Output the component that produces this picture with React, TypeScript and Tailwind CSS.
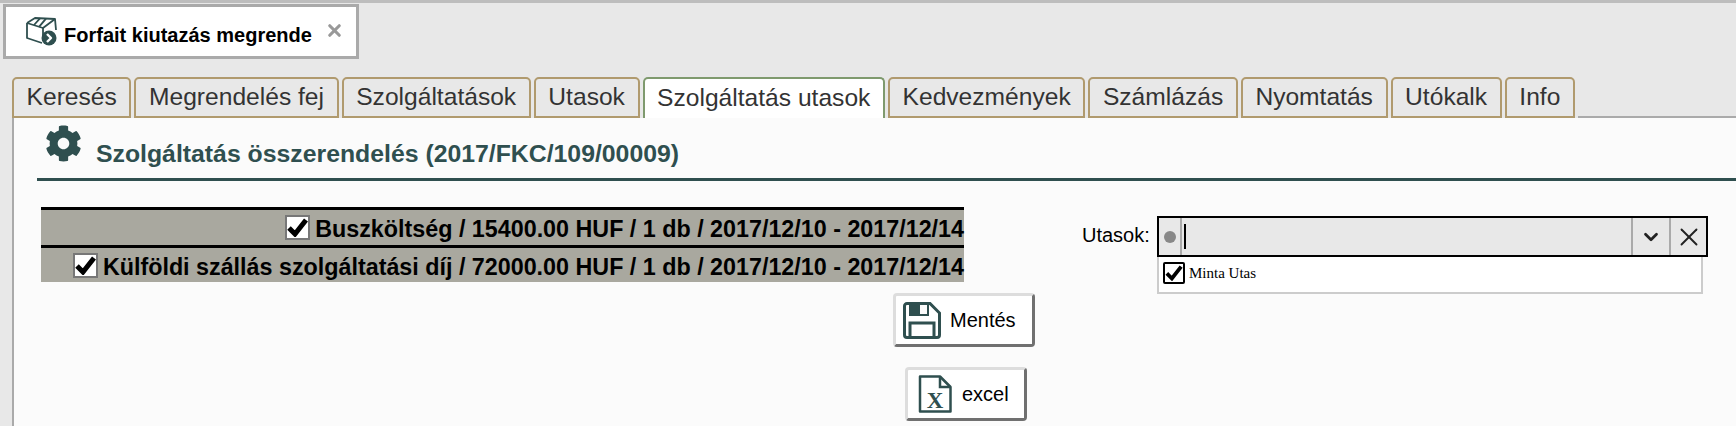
import { X, ChevronDown } from 'lucide-react';
import { FaCog } from 'react-icons/fa';

const tabs = ['Keresés', 'Megrendelés fej', 'Szolgáltatások', 'Utasok', 'Szolgáltatás utasok', 'Kedvezmények', 'Számlázás', 'Nyomtatás', 'Utókalk', 'Info'];

function BoxIcon() {
  return (
    <svg width="32" height="30" viewBox="0 0 32 30" fill="none" stroke="#2f4f4f" strokeWidth="1.8" strokeLinejoin="round">
      <path d="M1 6 L9 1 L29 2 L30 13" />
      <path d="M1 6 L17 11 L29 2" />
      <path d="M1 6 V21 L16 26" />
      <path d="M17 11 V19" />
      <path d="M14 1.3 L8 8 M20 1.6 L13 9.8" />
      <circle cx="23" cy="21" r="7.5" fill="#2f4f4f" stroke="none" />
      <path d="M21 17 L25 21 L21 25" stroke="#fff" strokeWidth="2.4" />
    </svg>
  );
}

function SaveIcon() {
  return (
    <svg width="38" height="37" viewBox="0 0 38 37" fill="none">
      <path d="M4 1.5 H27 L36.5 11 V33 a2.5 2.5 0 0 1 -2.5 2.5 H4 A2.5 2.5 0 0 1 1.5 33 V4 A2.5 2.5 0 0 1 4 1.5 Z" stroke="#2f4f4f" strokeWidth="3" />
      <path d="M6 3 H26 V14 H6 Z" fill="#2f4f4f" />
      <rect x="17" y="3" width="7" height="9" fill="#fbfbfb" />
      <path d="M7 34 V21 H31 V34" stroke="#2f4f4f" strokeWidth="3" />
    </svg>
  );
}

function ExcelIcon() {
  return (
    <svg width="34" height="38" viewBox="0 0 34 38" fill="none">
      <path d="M2 1.5 H22 L32.5 12 V36.5 H2 Z" stroke="#2f4f4f" strokeWidth="2.5" strokeLinejoin="round" />
      <path d="M22 1.5 V12 H32.5" stroke="#2f4f4f" strokeWidth="2.5" />
      <text x="17" y="33" textAnchor="middle" fontFamily="Liberation Serif" fontWeight="700" fontSize="23" fill="#2f4f4f">X</text>
    </svg>
  );
}

function RowCheck() {
  return (
    <span className="w-[25px] h-[25px] border-[2px] border-[#777] bg-white flex items-center justify-center shrink-0">
      <svg width="21" height="19" viewBox="0 0 21 19" fill="none">
        <path d="M2 10 L8 16 L19 2" stroke="#000" strokeWidth="5" />
      </svg>
    </span>
  );
}

export default function App() {
  return (
    <div className="w-[1736px] h-[426px] overflow-hidden bg-[#e8e8e8] flex flex-col font-['Liberation_Sans',sans-serif]">
      <div className="h-[3px] bg-[#bdbdbd] shrink-0" />

      {/* open document tab */}
      <div className="ml-[3px] mt-[1px] w-[356px] h-[55px] bg-white border-[3px] border-[#aaaaaa] flex items-center pl-[20px] shrink-0">
        <BoxIcon />
        <span className="ml-[6px] mt-[7px] text-[20px] font-bold text-black leading-none">Forfait kiutazás megrende</span>
        <X className="ml-[13px] -mt-[3px] text-[#999]" size={19} strokeWidth={4} />
      </div>

      {/* tab strip */}
      <div className="flex items-end gap-[3px] ml-[12px] mt-[18px] h-[41px] shrink-0">
        {tabs.map((t) => (
          <div
            key={t}
            className={
              t === 'Szolgáltatás utasok'
                ? 'h-full px-[12.6px] flex items-center rounded-t-[5px] border-2 border-b-0 border-[#7f9a6e] bg-white text-[24.6px] text-[#333]'
                : 'h-full px-[12.6px] flex items-center rounded-t-[5px] border-2 border-[#b09a6e] bg-[#e8e8e8] text-[24.6px] text-[#333]'
            }
          >
            {t}
          </div>
        ))}
        <div className="flex-1 border-b-2 border-[#aaaaaa]" />
      </div>

      {/* panel */}
      <div className="flex-1 bg-[#fbfbfb] ml-[12px] border-l-2 border-[#aaaaaa] pl-[23px]">
        <div className="border-b-[3px] border-[#2f4f4f] h-[63px] flex items-start">
          <FaCog className="ml-[8px] mt-[7px] text-[#2f4f4f]" size={37} />
          <span className="ml-[14px] mt-[24px] text-[24.8px] font-bold text-[#2f4f4f] leading-none whitespace-nowrap">
            Szolgáltatás összerendelés (2017/FKC/109/00009)
          </span>
        </div>

        <div className="flex mt-[26px] h-[86px]">
          <div className="ml-[4px] w-[923px] shrink-0">
            <div className="h-[38px] border-t-[3px] border-black bg-[#a9a89f] flex items-center justify-end gap-[5px] text-[23.3px] font-bold text-black leading-none whitespace-nowrap">
              <RowCheck />
              <span className="mt-[5px]">Buszköltség / 15400.00 HUF / 1 db / 2017/12/10 - 2017/12/14</span>
            </div>
            <div className="h-[37px] border-t-[3px] border-black bg-[#a9a89f] flex items-center justify-end gap-[5px] text-[23.3px] font-bold text-black leading-none whitespace-nowrap">
              <RowCheck />
              <span className="mt-[5px]">Külföldi szállás szolgáltatási díj / 72000.00 HUF / 1 db / 2017/12/10 - 2017/12/14</span>
            </div>
          </div>

          <div className="ml-[118px] mt-[9px] flex items-start">
            <span className="mt-[9px] text-[20px] text-black leading-none w-[75px]">Utasok:</span>
            <div className="w-[551px]">
              <div className="h-[41px] border-[2px] border-black bg-[#e8e8e8] flex items-stretch">
                <div className="w-[23px] border-r-2 border-[#aaa] flex items-center justify-center">
                  <span className="w-[12px] h-[12px] rounded-full bg-[#888]" />
                </div>
                <div className="flex-1 flex items-center pl-[2px]">
                  <span className="w-[2px] h-[25px] bg-black" />
                </div>
                <div className="w-[38px] border-l-2 border-[#aaa] flex items-center justify-center">
                  <ChevronDown size={22} strokeWidth={3} className="text-[#222]" />
                </div>
                <div className="w-[37px] border-l-2 border-[#aaa] flex items-center justify-center">
                  <X size={30} strokeWidth={1.5} className="text-[#222]" />
                </div>
              </div>
              <div className="w-[546px] h-[37px] border-[2px] border-t-0 border-[#cccccc] bg-white flex items-start pl-[4px] pt-[5px] gap-[4px]">
                <span className="w-[22px] h-[22px] border-[2px] border-black rounded-[2px] bg-white flex items-center justify-center shrink-0">
                  <svg width="18" height="16" viewBox="0 0 21 19" fill="none">
                    <path d="M2 10 L8 16 L19 2" stroke="#000" strokeWidth="4.5" />
                  </svg>
                </span>
                <span className="font-['Liberation_Serif',serif] text-[15px] text-black leading-[22px]">Minta Utas</span>
              </div>
            </div>
          </div>
        </div>

        <div className="flex flex-col items-start ml-[856px]">
          <div className="w-[142px] h-[54px] bg-white rounded-[4px] border-[3px] border-[#dddddd] border-r-[#707070] border-b-[#707070] flex items-center pl-[7px] gap-[9px] text-[20px] text-black">
            <SaveIcon />
            <span>Mentés</span>
          </div>
          <div className="mt-[20px] ml-[12px] w-[122px] h-[54px] bg-white rounded-[4px] border-[3px] border-[#dddddd] border-r-[#707070] border-b-[#707070] flex items-center pl-[10px] gap-[10px] text-[20px] text-black">
            <ExcelIcon />
            <span>excel</span>
          </div>
        </div>
      </div>
    </div>
  );
}
